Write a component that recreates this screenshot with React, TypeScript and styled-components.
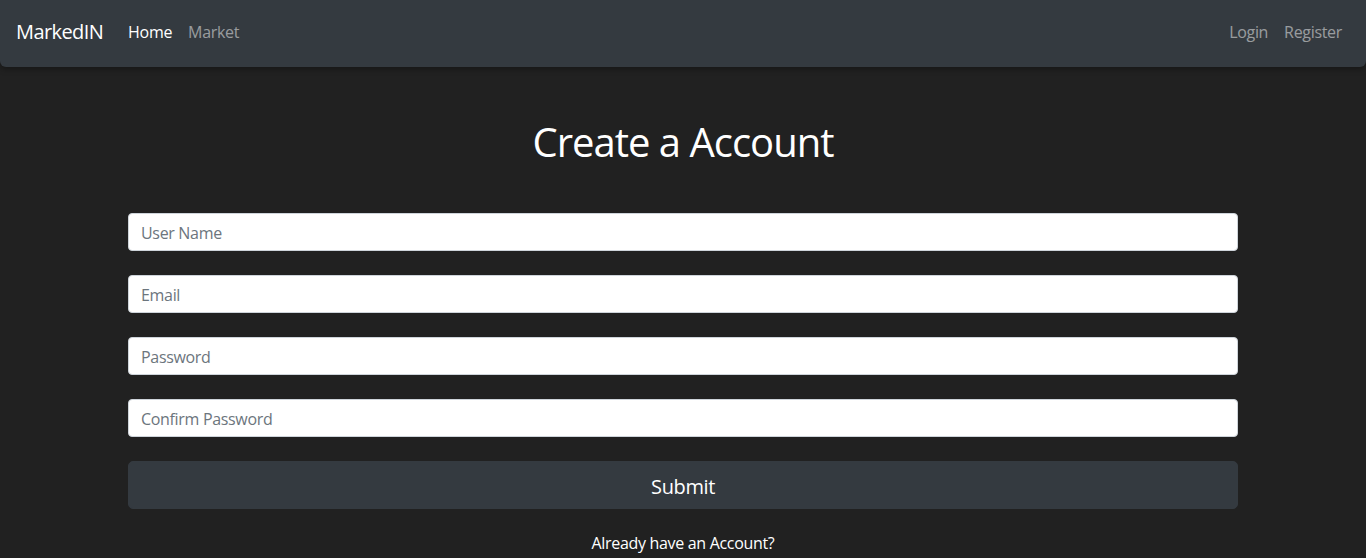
import React from "react";
import styled, { createGlobalStyle } from "styled-components";

const Global = createGlobalStyle`
  html, body { margin: 0; padding: 0; }
  body {
    background: #212121;
    color: #fff;
    font-family: "Open Sans", "Noto Sans", "Liberation Sans", sans-serif;
    font-size: 16px;
    line-height: 1.5;
    letter-spacing: -0.02em;
  }
  * { box-sizing: border-box; }
`;

const NavBar = styled.nav`
  height: 67px;
  background: #343a40;
  display: flex;
  align-items: center;
  padding: 0 16px 3px;
  border-radius: 0 0 6px 6px;
  box-shadow: 0 2px 6px rgba(0, 0, 0, 0.35);
`;

const Brand = styled.a`
  font-size: 20px;
  color: #fff;
  margin-right: 17px;
  letter-spacing: -0.03em;
  text-decoration: none;
`;

const NavList = styled.div<{ $right?: boolean }>`
  display: flex;
  margin-left: ${(p) => (p.$right ? "auto" : "0")};
`;

const NavLink = styled.a<{ $active?: boolean }>`
  padding: 8px;
  font-size: 16px;
  color: ${(p) => (p.$active ? "#ffffff" : "rgba(255,255,255,0.5)")};
  text-decoration: none;
`;

const Container = styled.main`
  max-width: 1140px;
  margin: 0 auto;
  padding: 0 15px;
`;

const Title = styled.h1`
  font-size: 40px;
  font-weight: 400;
  line-height: 1.2;
  text-align: center;
  letter-spacing: -0.025em;
  margin: 51px 0 47px;
`;

const Form = styled.form`
  display: flex;
  flex-direction: column;
`;

const Input = styled.input`
  height: 38px;
  width: 100%;
  padding: 7px 12px 5px;
  font-family: inherit;
  font-size: 16px;
  letter-spacing: -0.02em;
  color: #495057;
  background: #fff;
  border: 1px solid #ced4da;
  border-radius: 4px;
  margin-bottom: 24px;
  &::placeholder { color: #6c757d; }
`;

const Submit = styled.button`
  height: 48px;
  width: 100%;
  background: #343a40;
  color: #fff;
  border: 1px solid #343a40;
  border-radius: 5px;
  font-family: inherit;
  font-size: 20px;
  letter-spacing: -0.02em;
  padding-top: 4px;
`;

const Footer = styled.p`
  text-align: center;
  margin: 22px 0 0;
  font-size: 16px;
`;

export default function App() {
  return (
    <>
      <Global />
      <NavBar>
        <Brand href="#">MarkedIN</Brand>
        <NavList>
          <NavLink $active href="#">Home</NavLink>
          <NavLink href="#">Market</NavLink>
        </NavList>
        <NavList $right>
          <NavLink href="#">Login</NavLink>
          <NavLink href="#">Register</NavLink>
        </NavList>
      </NavBar>
      <Container>
        <Title>Create a Account</Title>
        <Form onSubmit={(e) => e.preventDefault()}>
          <Input placeholder="User Name" />
          <Input placeholder="Email" />
          <Input type="password" placeholder="Password" />
          <Input type="password" placeholder="Confirm Password" />
          <Submit type="submit">Submit</Submit>
        </Form>
        <Footer>Already have an Account?</Footer>
      </Container>
    </>
  );
}
